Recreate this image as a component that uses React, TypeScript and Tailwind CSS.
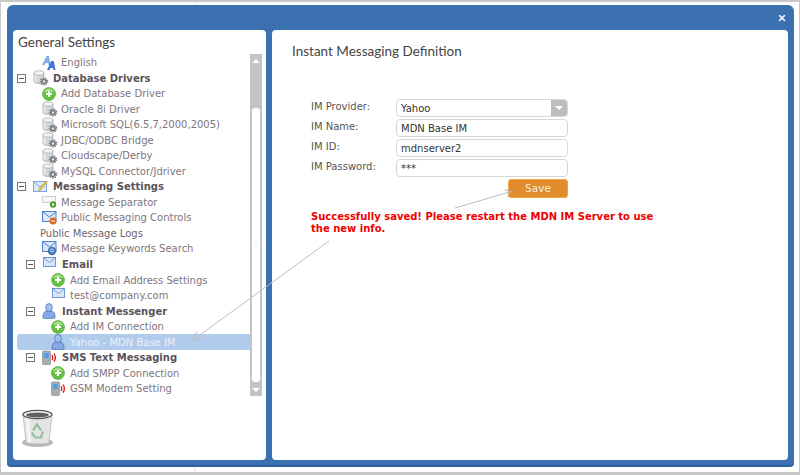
import { X } from 'lucide-react'

type IconName = 'lang' | 'db' | 'add' | 'msg' | 'sep' | 'pub' | 'search' | 'mail' | 'user' | 'sms'

function GearDb() {
  return (
    <svg width="16" height="16" viewBox="0 0 16 16">
      <path d="M1 3v8.500c0 1.200 2.200 2 5 2s5-.8 5-2V3z" fill="#d4d7d9" stroke="#a2a6a9" strokeWidth="0.7" />
      <path d="M2.500 4v8" stroke="#f4f5f5" strokeWidth="1.400" />
      <ellipse cx="6" cy="3" rx="5" ry="2.200" fill="#f1f2f3" stroke="#a2a6a9" strokeWidth="0.7" />
      <circle cx="11" cy="11.500" r="3" fill="#77797b" />
      <circle cx="11" cy="11.500" r="3.700" fill="none" stroke="#6f7173" strokeWidth="1.200" strokeDasharray="1.300 1.300" />
      <circle cx="11" cy="11.500" r="1.300" fill="#e6e6e6" />
    </svg>
  )
}

function AddIcon() {
  return (
    <svg width="14" height="14" viewBox="0 0 14 14">
      <circle cx="7" cy="7" r="6.500" fill="#62c23e" stroke="#4fa234" strokeWidth="0.600" />
      <path d="M2 5.500C3 2.500 5 1.500 7 1.500s4 1 5 4c-3-1.500-7-1.500-10 0z" fill="#a4e08a" />
      <path d="M7 4v6M4 7h6" stroke="#fff" strokeWidth="2" />
    </svg>
  )
}

function UserIcon() {
  return (
    <svg width="14" height="16" viewBox="0 0 14 16">
      <path d="M1 15c-.4-4 1-6.500 3.500-7h5c2.500.5 3.900 3 3.500 7-2 .8-10 .8-12 0z" fill="#84a9e4" stroke="#3f6db5" strokeWidth="0.700" />
      <ellipse cx="7" cy="4.500" rx="3.300" ry="3.900" fill="#a5c2ee" stroke="#3f6db5" strokeWidth="0.700" />
    </svg>
  )
}

function MailIcon() {
  return (
    <svg width="13" height="10" viewBox="0 0 13 10">
      <rect x="0.500" y="0.500" width="12" height="9" fill="#d9e6f8" stroke="#6f97d6" />
      <path d="M1 1l5.500 4.500L12 1" fill="none" stroke="#6f97d6" />
    </svg>
  )
}

function Icon({ name }: { name: IconName }) {
  if (name === 'db') return <GearDb />
  if (name === 'add') return <AddIcon />
  if (name === 'user') return <UserIcon />
  if (name === 'mail') return <span className="-mt-[5px] ml-[1px] flex"><MailIcon /></span>
  if (name === 'lang')
    return (
      <svg width="15" height="14" viewBox="0 0 15 14">
        <path d="M0 9L4.500 0h2.500l1.500 9H6.300L6 7H3.500l-1 2z" fill="#86aee8" />
        <path d="M5 14l4-9h2.800l1.700 9h-2.200l-.3-2H8.500l-1 2z" fill="#3f78d0" />
      </svg>
    )
  if (name === 'msg')
    return (
      <svg width="15" height="13" viewBox="0 0 15 13">
        <rect x="0.500" y="1.500" width="13" height="10" fill="#dde8f8" stroke="#7fa3dc" />
        <path d="M1 2l6 5 6-5" fill="none" stroke="#7fa3dc" />
        <path d="M6 9l7-8 1.500 1.300-7 8L5.500 11z" fill="#ecc04a" stroke="#b98a16" strokeWidth="0.400" />
      </svg>
    )
  if (name === 'sep')
    return (
      <svg width="15" height="14" viewBox="0 0 15 14">
        <rect x="0.500" y="1.500" width="13" height="6" fill="#f6f6f6" stroke="#cfcfcf" />
        <circle cx="11" cy="9.500" r="3.200" fill="#4f9a2c" />
        <circle cx="11" cy="9.500" r="1.200" fill="#fff" />
      </svg>
    )
  if (name === 'pub')
    return (
      <svg width="15" height="14" viewBox="0 0 15 14">
        <rect x="0.500" y="0.500" width="13.500" height="10" fill="#dce8f9" stroke="#4a80cc" />
        <path d="M1 1l6.500 5L14 1" fill="none" stroke="#4a80cc" />
        <circle cx="11" cy="10" r="3.500" fill="#e8641c" />
        <path d="M9 10h4" stroke="#fff" />
      </svg>
    )
  if (name === 'search')
    return (
      <svg width="15" height="15" viewBox="0 0 15 15">
        <rect x="0.500" y="0.500" width="13.500" height="10" fill="#dce8f9" stroke="#4a80cc" />
        <path d="M1 1l6.500 5L14 1" fill="none" stroke="#4a80cc" />
        <circle cx="10" cy="10" r="4.200" fill="#3f74b8" />
        <circle cx="10" cy="9.500" r="1.500" fill="none" stroke="#dfe9f7" />
      </svg>
    )
  return (
    <svg width="14" height="15" viewBox="0 0 14 15">
      <rect x="0.500" y="1" width="8" height="13.500" rx="1" fill="#a8acb0" stroke="#808386" strokeWidth="0.600" />
      <rect x="2.200" y="3" width="4.500" height="5" fill="#4aa0e8" />
      <path d="M10 5c1 1.700 1 3.500 0 5.200M12 3.500c1.800 2.700 1.800 5.500 0 8.200" fill="none" stroke="#e01818" strokeWidth="1.300" />
    </svg>
  )
}

function Toggle() {
  return (
    <span className="flex h-[9px] w-[9px] shrink-0 items-center justify-center border border-[#777] bg-white">
      <span className="h-px w-[5px] bg-[#555]" />
    </span>
  )
}

function Group({ label, icon, nested, className = '' }: { label: string; icon: IconName; nested?: boolean; className?: string }) {
  return (
    <div className={`flex h-[15.5px] items-center ${nested ? 'pl-[13px]' : 'pl-[4px]'} ${className}`}>
      <Toggle />
      <span className="ml-[7px] flex w-[20px] shrink-0 items-center"><Icon name={icon} /></span>
      <span className="font-bold text-[#59535b]">{label}</span>
    </div>
  )
}

function Item({ label, icon, nested, active }: { label: string; icon?: IconName; nested?: boolean; active?: boolean }) {
  let cls = 'pl-[29px] text-[#80757e]'
  if (nested) cls = 'pl-[38px] text-[#80757e]'
  if (active) cls = 'ml-[4px] pl-[34px] rounded-l-[3px] bg-[#b1cbec] text-[#e8f0fa]'
  return (
    <div className={`flex h-[15.5px] items-center ${cls}`}>
      {icon ? (
        <span className="flex w-[19px] shrink-0 items-center"><Icon name={icon} /></span>
      ) : null}
      <span className={icon ? '' : '-ml-[2px] text-[#6f666e]'}>{label}</span>
    </div>
  )
}

function Field({ label, value }: { label: string; value: string }) {
  return (
    <div className="flex items-start">
      <span className="w-[85px] shrink-0 leading-[15px] text-[#555]">{label}</span>
      <div className="flex h-[18px] w-[172px] items-center rounded-[4px] border border-[#d8d8d8] bg-white pl-1 text-[#333]">{value}</div>
    </div>
  )
}

export default function App() {
  return (
    <div className="relative h-[475px] w-[800px] overflow-hidden border-x border-t-2 border-b-[3px] border-x-[#c8c8c8] border-y-[#c8c8c8] bg-white pt-[3px] pr-[5px] pb-[5px] pl-[6px] text-[10px] [font-family:'DejaVu_Sans',sans-serif]">
      <div className="flex h-[462px] flex-col rounded-t-[6px] rounded-b-[4px] border-b-2 border-[#2f5f9e] bg-[#3b71b1] px-[6px] pb-[5px]">
        <div className="flex h-[25px] shrink-0 items-center justify-end pt-[1px] pr-[1px]">
          <X size={10} strokeWidth={3.5} className="text-white" />
        </div>
        <div className="flex min-h-0 flex-1 gap-[6px]">
          <div className="flex w-[253px] shrink-0 flex-col rounded-[4px] bg-white pt-[4px]">
            <h2 className="pl-[5px] text-[13.500px] leading-[16px] text-[#444] [font-family:Lato,sans-serif]">General Settings</h2>
            <div className="mt-[4px] flex h-[342px] items-stretch">
              <div className="min-w-0 flex-1 pt-px">
                <Item label="English" icon="lang" />
                <Group label="Database Drivers" icon="db" />
                <Item label="Add Database Driver" icon="add" />
                <Item label="Oracle 8i Driver" icon="db" />
                <Item label="Microsoft SQL(6.5,7,2000,2005)" icon="db" />
                <Item label="JDBC/ODBC Bridge" icon="db" />
                <Item label="Cloudscape/Derby" icon="db" />
                <Item label="MySQL Connector/Jdriver" icon="db" />
                <Group label="Messaging Settings" icon="msg" />
                <Item label="Message Separator" icon="sep" />
                <Item label="Public Messaging Controls" icon="pub" />
                <Item label="Public Message Logs" />
                <Item label="Message Keywords Search" icon="search" />
                <Group label="Email" icon="mail" nested className="mt-[0.300px]" />
                <Item label="Add Email Address Settings" icon="add" nested />
                <Item label="test@company.com" icon="mail" nested />
                <Group label="Instant Messenger" icon="user" nested />
                <Item label="Add IM Connection" icon="add" nested />
                <Item label="Yahoo - MDN Base IM" icon="user" nested active />
                <Group label="SMS Text Messaging" icon="sms" nested />
                <Item label="Add SMPP Connection" icon="add" nested />
                <Item label="GSM Modem Setting" icon="sms" nested />
              </div>
              <div className="mr-[4px] flex w-[12px] shrink-0 flex-col bg-[#c4c4c4]">
                <div className="flex h-[13px] items-center justify-center">
                  <span className="h-0 w-0 border-x-[4px] border-b-[4px] border-x-transparent border-b-white" />
                </div>
                <div className="mx-[2px] mt-[41px] mb-[2px] flex flex-1 items-center justify-center rounded-[3px] bg-white">
                  <span className="text-[7px] leading-none text-[#bbb]">⋮</span>
                </div>
                <div className="flex h-[12px] items-center justify-center">
                  <span className="h-0 w-0 border-x-[4px] border-t-[4px] border-x-transparent border-t-white" />
                </div>
              </div>
            </div>
            <div className="mt-[13px] pl-[8px]">
              <svg width="33" height="39" viewBox="0 0 33 38">
                <ellipse cx="16.500" cy="33" rx="15.500" ry="4.500" fill="#8b8b8b" opacity="0.600" />
                <path d="M2 5l3 28c.4 2 22.600 2 23 0l3-28z" fill="#e2e5e3" stroke="#a8a8a8" strokeWidth="0.600" />
                <path d="M5 8l2 25h3L8 9z" fill="#f6f7f6" />
                <ellipse cx="16.500" cy="5" rx="14.500" ry="4.200" fill="#f7f7f7" stroke="#555" strokeWidth="1.300" />
                <ellipse cx="16.500" cy="5.500" rx="11.500" ry="2.500" fill="#5f6360" />
                <path d="M12 21l4-6 4 6M22 22l-2 6h-6M11 23l3 5" fill="none" stroke="#8fbf93" strokeWidth="2.200" />
              </svg>
            </div>
          </div>
          <div className="min-w-0 flex-1 rounded-[4px] bg-white pt-[13px] pl-[20px]">
            <h1 className="text-[13.500px] leading-[17px] text-[#444] [font-family:Lato,sans-serif]">Instant Messaging Definition</h1>
            <div className="pl-[19px]">
              <div className="mt-[39px] flex w-[257px] flex-col gap-[2px]">
                <div className="flex items-start">
                  <span className="w-[85px] shrink-0 leading-[15px] text-[#555]">IM Provider:</span>
                  <div className="flex h-[18px] w-[172px] items-center justify-between rounded-[4px] border border-[#d8d8d8] bg-white pl-[4px] text-[#333]">
                    Yahoo
                    <span className="flex h-full w-[16px] items-center justify-center rounded-r-[3px] bg-[#bdbdbd]">
                      <span className="h-0 w-0 border-x-[4px] border-t-[4px] border-x-transparent border-t-white" />
                    </span>
                  </div>
                </div>
                <Field label="IM Name:" value="MDN Base IM" />
                <Field label="IM ID:" value="mdnserver2" />
                <Field label="IM Password:" value="***" />
              </div>
              <div className="mt-[2px] flex w-[257px] justify-end">
                <button className="h-[19px] w-[60px] rounded-[3px] border border-[#eda548] bg-[#e08b2c] text-[10.500px] text-[#fbeede]">Save</button>
              </div>
              <p className="mt-[13px] w-[345px] text-[10px] leading-[12px] font-bold text-[#f00000]">
                Successfully saved! Please restart the MDN IM Server to use the new info.
              </p>
            </div>
          </div>
        </div>
      </div>
      <svg className="pointer-events-none absolute top-[-2px] left-[-1px]" width="800" height="475" viewBox="0 0 800 475">
        <path d="M329 241L193 340" stroke="#bdbdbd" fill="none" />
        <path d="M193 340l10-1M193 340l4-8" stroke="#bdbdbd" fill="none" />
        <path d="M455 208L513 191" stroke="#bdbdbd" fill="none" />
        <path d="M513 191l-8-1M513 191l-6 6" stroke="#c9a070" fill="none" />
        <path d="M195 0v4M195 468v5" stroke="#bbb" strokeDasharray="1 1" fill="none" />
      </svg>
    </div>
  )
}
